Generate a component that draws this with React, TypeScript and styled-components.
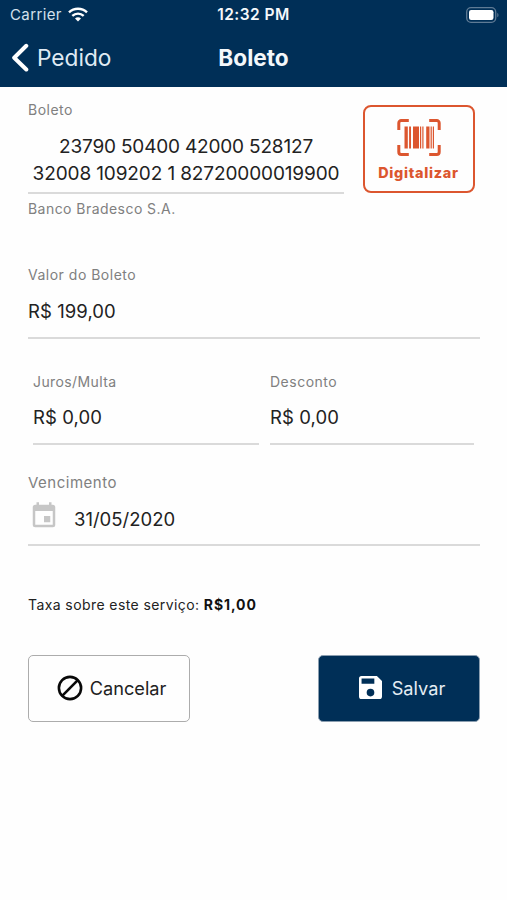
import React from "react";
import styled, { createGlobalStyle } from "styled-components";

const navy = "#002f57";
const orange = "#dc562f";

const GlobalStyle = createGlobalStyle`
  * { box-sizing: border-box; }
  body { margin: 0; background: #fefefe; font-family: Inter, "Liberation Sans", sans-serif; color: #222; }
  button { font-family: inherit; margin: 0; padding: 0; cursor: pointer; }
  svg { display: block; flex: none; }
`;

const Screen = styled.div`
  width: 507px;
  height: 900px;
  background: #fefefe;
  overflow: hidden;
`;

const Header = styled.header`
  height: 87px;
  background: ${navy};
  color: #f4f8fb;
`;

const StatusBar = styled.div`
  display: grid;
  grid-template-columns: 1fr auto 1fr;
  align-items: center;
  height: 29px;
  padding: 0 8px 0 10px;
`;

const Carrier = styled.div`
  display: flex;
  align-items: center;
  gap: 6px;
  font-size: 15px;
  letter-spacing: 0.38px;
  color: #d3e0ec;
`;

const Clock = styled.div`
  font-size: 15.5px;
  font-weight: 600;
  letter-spacing: 0.45px;
  transform: translateX(-1px);
`;

const BatterySlot = styled.div`
  justify-self: end;
`;

const NavBar = styled.nav`
  display: grid;
  grid-template-columns: 1fr auto 1fr;
  align-items: center;
  height: 58px;
  padding: 0 11px;
`;

const BackButton = styled.button`
  display: flex;
  align-items: center;
  gap: 8px;
  border: 0;
  background: none;
  color: #dfeaf3;
  font-size: 22.7px;
  line-height: 30px;

  svg { margin-top: -2px; }
`;

const Title = styled.h1`
  margin: 0;
  font-size: 22.6px;
  line-height: 30px;
  font-weight: 700;
`;

const Form = styled.main`
  padding: 0 27px 0 28px;
`;

const TopRow = styled.div`
  display: flex;
  justify-content: space-between;
  padding-right: 5px;
`;

const Field = styled.div<{ $width?: number }>`
  width: ${(p) => (p.$width ? `${p.$width}px` : "100%")};
`;

const Label = styled.div<{ $spacing?: number; $size?: number }>`
  font-size: ${(p) => p.$size ?? 14}px;
  line-height: 20px;
  letter-spacing: ${(p) => p.$spacing ?? 0.5}px;
  color: #808080;
  white-space: nowrap;
`;

const Code = styled.div`
  margin-top: 13px;
  height: 61px;
  border-bottom: 2px solid #dadada;
  font-size: 19px;
  line-height: 27px;
  text-align: center;
  white-space: nowrap;
`;

const CodeLine = styled.div<{ $spacing: number }>`
  letter-spacing: ${(p) => p.$spacing}px;
`;

const BoletoField = styled(Field)`
  padding-top: 13px;
`;

const Bank = styled(Label)`
  margin-top: 5px;
`;

const ScanButton = styled.button`
  display: flex;
  flex-direction: column;
  align-items: center;
  width: 112px;
  height: 88px;
  margin-top: 18px;
  padding: 12px 1px 0 0;
  border: 2.5px solid ${orange};
  border-radius: 8px;
  background: #fefefe;
  color: ${orange};
  font-size: 14.4px;
  font-weight: 800;
  line-height: 20px;
  letter-spacing: 0.7px;
`;

const ScanText = styled.span`
  margin-top: 7px;
  white-space: nowrap;
`;

const Value = styled.div<{ $height?: number; $top?: number }>`
  display: flex;
  height: ${(p) => p.$height ?? 53}px;
  padding-top: ${(p) => p.$top ?? 12}px;
  border-bottom: 2px solid #dadada;
  font-size: 18.5px;
  line-height: 27px;
  letter-spacing: 0.07px;
  white-space: nowrap;
`;

const AmountField = styled(Field)`
  margin-top: 46px;
`;

const Pair = styled.div`
  display: flex;
  gap: 11px;
  margin-top: 33px;
  padding-left: 5px;
`;

const DueField = styled(Field)`
  margin-top: 28px;
`;

const DueValue = styled(Value)`
  gap: 15px;
  padding-left: 1px;
  letter-spacing: 0;

  svg { margin-top: -5px; }
`;

const Fee = styled.p`
  margin: 49px 0 0;
  font-size: 14px;
  line-height: 20px;
  letter-spacing: 0.41px;
`;

const Strong = styled.strong`
  font-weight: 700;
  letter-spacing: 0.9px;
  color: #111;
`;

const Actions = styled.div`
  display: flex;
  justify-content: space-between;
  margin-top: 40px;
`;

const ActionButton = styled.button<{ $primary?: boolean }>`
  display: flex;
  align-items: center;
  justify-content: center;
  gap: ${(p) => (p.$primary ? 10 : 7)}px;
  width: 162px;
  height: 67px;
  padding: 0 0 2px ${(p) => (p.$primary ? 6 : 5)}px;
  border: 1.5px solid ${(p) => (p.$primary ? "#8b9eb0" : "#acacac")};
  border-radius: 5px;
  background: ${(p) => (p.$primary ? navy : "#fefefe")};
  color: ${(p) => (p.$primary ? "#e4edf4" : "#222")};
  font-size: 18.2px;
`;

const WifiIcon = () => (
  <svg width="20" height="15" viewBox="0 0 20 15" fill="none" stroke="#fff" strokeWidth="2.4">
    <path d="M1 5.4C6 .6 14 .6 19 5.4M4.3 8.9c3.3-3.1 8.1-3.1 11.4 0" />
    <path d="M10 14.6 7 11.5c1.7-1.6 4.3-1.6 6 0z" fill="#fff" stroke="none" />
  </svg>
);

const BatteryIcon = () => (
  <svg width="33" height="16" viewBox="0 0 33 16">
    <rect x=".7" y=".7" width="29" height="14.6" rx="4.3" fill="none" stroke="#5f7b95" strokeWidth="1.3" />
    <rect x="3" y="3" width="24.5" height="10" rx="2.2" fill="#fff" />
    <path d="M31.3 5.7c1.6.7 1.6 3.9 0 4.6z" fill="#5f7b95" />
  </svg>
);

const BackIcon = () => (
  <svg width="18" height="29" viewBox="0 0 18 29" fill="none" stroke="#fff" strokeWidth="4" strokeLinecap="round" strokeLinejoin="round">
    <path d="M15.3 2.8 3.2 14.7l12.1 11.8" />
  </svg>
);

const BarcodeIcon = () => (
  <svg width="44" height="37" viewBox="0 0 44 37" fill="none" stroke={orange}>
    <path strokeWidth="3" d="M1.8 11V4a2.4 2.4 0 0 1 2.4-2.4h7.6M32.2 1.6h7.6A2.4 2.4 0 0 1 42.2 4v7M42.2 26v7a2.4 2.4 0 0 1-2.4 2.4h-7.6M11.8 35.4H4.2A2.4 2.4 0 0 1 1.8 33v-7" />
    <path fill={orange} stroke="none" d="M7.5 7.5h3.3v22H7.5zM12.1 7.5h1.9v22h-1.9zM16 7.5h6v22h-6zM23 7.5h1.2v22H23zM25.3 7.5h1.2v22h-1.2zM29.2 7.5h3.3v22h-3.3zM33.6 7.5h1.2v22h-1.2zM35.8 7.5H37v22h-1.2z" />
  </svg>
);

const CalendarIcon = () => (
  <svg width="30" height="30" viewBox="0 0 24 24" fill="#c6c6c6">
    <path d="M17 12h-5v5h5zM16 1v2H8V1H6v2H5a2 2 0 0 0-2 2v14a2 2 0 0 0 2 2h14a2 2 0 0 0 2-2V5a2 2 0 0 0-2-2h-1V1zm3 18H5V8h14z" />
  </svg>
);

const BlockIcon = () => (
  <svg width="26" height="26" viewBox="0 0 26 26" fill="none" stroke="#090909" strokeWidth="2.6">
    <circle cx="13" cy="13" r="11.1" />
    <path d="M5.2 20.8 20.8 5.2" />
  </svg>
);

const SaveIcon = () => (
  <svg width="23" height="23" viewBox="3 3 18 18" fill="#fff">
    <path d="M17 3H5a2 2 0 0 0-2 2v14a2 2 0 0 0 2 2h14a2 2 0 0 0 2-2V7zm-5 16a3 3 0 1 1 0-6 3 3 0 0 1 0 6zm3-10H5V5h10z" />
  </svg>
);

export default function App() {
  return (
    <Screen>
      <GlobalStyle />
      <Header>
        <StatusBar>
          <Carrier>Carrier <WifiIcon /></Carrier>
          <Clock>12:32 PM</Clock>
          <BatterySlot><BatteryIcon /></BatterySlot>
        </StatusBar>
        <NavBar>
          <BackButton><BackIcon />Pedido</BackButton>
          <Title>Boleto</Title>
        </NavBar>
      </Header>
      <Form>
        <TopRow>
          <BoletoField $width={316}>
            <Label>Boleto</Label>
            <Code>
              <CodeLine $spacing={-0.18}>23790 50400 42000 528127</CodeLine>
              <CodeLine $spacing={-0.12}>32008 109202 1 82720000019900</CodeLine>
            </Code>
            <Bank $spacing={0.45}>Banco Bradesco S.A.</Bank>
          </BoletoField>
          <ScanButton>
            <BarcodeIcon />
            <ScanText>Digitalizar</ScanText>
          </ScanButton>
        </TopRow>
        <AmountField>
          <Label>Valor do Boleto</Label>
          <Value $height={54} $top={13}>R$ 199,00</Value>
        </AmountField>
        <Pair>
          <Field $width={226}>
            <Label $spacing={0.4}>Juros/Multa</Label>
            <Value>R$ 0,00</Value>
          </Field>
          <Field $width={204}>
            <Label>Desconto</Label>
            <Value>R$ 0,00</Value>
          </Field>
        </Pair>
        <DueField>
          <Label $size={15}>Vencimento</Label>
          <DueValue $top={13}><CalendarIcon />31/05/2020</DueValue>
        </DueField>
        <Fee>Taxa sobre este serviço: <Strong>R$1,00</Strong></Fee>
        <Actions>
          <ActionButton><BlockIcon />Cancelar</ActionButton>
          <ActionButton $primary><SaveIcon />Salvar</ActionButton>
        </Actions>
      </Form>
    </Screen>
  );
}
